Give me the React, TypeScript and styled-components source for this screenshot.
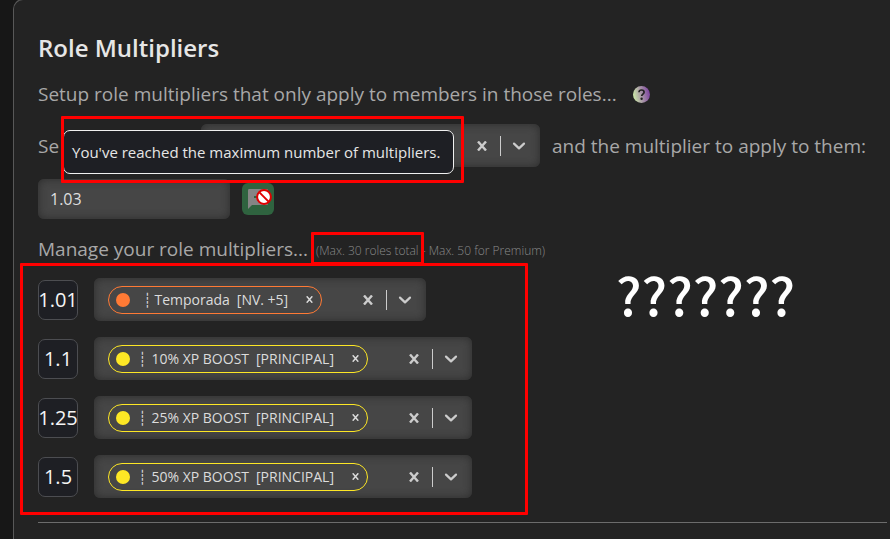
import React from "react";
import styled, { createGlobalStyle } from "styled-components";

const GlobalStyle = createGlobalStyle`
  *, *::before, *::after { box-sizing: border-box; }
  html { background: #171717; }
  body {
    margin: 0;
    background: #171717;
    color: #a8a8a8;
    font-family: "Open Sans", "Noto Sans", sans-serif;
    font-size: 19px;
    line-height: 28px;
    overflow: hidden;
  }
  button, input { font: inherit; color: inherit; }
  h2, p, ul { margin: 0; padding: 0; }
  ul { list-style: none; }
`;

const Page = styled.main`
  padding-left: 13px;
  overflow: hidden;
`;

const Panel = styled.section`
  margin-top: -1px;
  min-height: calc(100vh + 1px);
  padding: 31px 3px 0 24px;
  border: 1px solid #585858;
  border-right: 0;
  border-bottom: 0;
  border-top-left-radius: 10px;
  background: #232323;
`;

const Title = styled.h2`
  color: #e6e6e6;
  font-size: 24px;
  font-weight: 600;
  line-height: 34px;
`;

const Intro = styled.p`
  display: flex;
  align-items: center;
  gap: 16px;
  margin-top: 15px;
`;

const HelpButton = styled.button`
  display: flex;
  padding: 0;
  border: 0;
  background: none;
`;

const Form = styled.form`
  position: relative;
  display: flex;
  flex-wrap: wrap;
  align-items: center;
  gap: 12px;
  margin-top: 16px;
`;

const SelectLabel = styled.span`
  flex: 0 0 151px;
  white-space: nowrap;
`;

const SelectBox = styled.div<{ $wide?: boolean }>`
  display: flex;
  align-items: center;
  width: ${(p) => (p.$wide ? "339px" : "auto")};
  height: 43px;
  padding: 0 14px;
  border-radius: 6px;
  background: #464646;
  box-shadow: inset 0 0 8px #2c2c2c;
  color: #cccccc;
`;

const SelectTools = styled.div`
  display: flex;
  align-items: center;
  gap: 11px;
  margin-left: auto;
  padding-left: 41px;
`;

const IconButton = styled.button`
  display: flex;
  align-items: center;
  justify-content: center;
  padding: 0;
  border: 0;
  background: none;
`;

const Divider = styled.span`
  width: 1px;
  height: 20px;
  margin-left: 2px;
  background: #cccccc;
`;

const NumberInput = styled.input`
  width: 192px;
  height: 40px;
  padding: 0 12px;
  border: 0;
  border-radius: 6px;
  background: #464646;
  box-shadow: inset 0 0 8px #2c2c2c;
  color: #dedede;
  font-size: 16px;
  outline: none;
`;

const AddButton = styled.button`
  position: relative;
  display: flex;
  align-items: center;
  justify-content: center;
  width: 32px;
  height: 32px;
  padding: 0;
  border: 0;
  border-radius: 6px;
  background: #2f633f;
`;

const BlockedCursor = styled.svg`
  position: absolute;
  top: 6px;
  left: 14px;
`;

const Tooltip = styled.div`
  position: absolute;
  top: 6px;
  left: 25px;
  padding: 9px 13px 9px 8px;
  border: 1px solid #f0f0f0;
  border-radius: 7px;
  background: #1e1f24;
  color: #e6e6e6;
  font-size: 15px;
  line-height: 24px;
  white-space: nowrap;
`;

const Mark = styled.span<{ $inset: string }>`
  position: absolute;
  inset: ${(p) => p.$inset};
  border: 3px solid #ff0000;
  border-radius: 1px;
  pointer-events: none;
`;

const Manage = styled.p`
  display: flex;
  align-items: center;
  gap: 8px;
  margin-top: 16px;
`;

const Limits = styled.small`
  margin-top: 4px;
  color: #8a8a8a;
  font-size: 12px;
  font-weight: 300;
  line-height: 20px;
`;

const Marked = styled.span`
  position: relative;
`;

const Content = styled.div`
  display: flex;
  align-items: flex-start;
  gap: 144px;
  margin-top: 15px;
`;

const List = styled.ul`
  position: relative;
  display: grid;
  gap: 16px;
  flex: 0 0 434px;
`;

const Row = styled.li`
  display: flex;
  align-items: center;
  gap: 16px;
`;

const Badge = styled.span`
  display: flex;
  align-items: center;
  justify-content: center;
  width: 40px;
  height: 40px;
  border: 1px solid #4c4d51;
  border-radius: 7px;
  background: #1e1f24;
  color: #f4f4f4;
  font-size: 20px;
`;

const Chip = styled.span<{ $color: string }>`
  display: flex;
  align-items: center;
  height: 28px;
  padding: 0 8px 0 7px;
  border: 1px solid ${(p) => p.$color};
  border-radius: 14px;
  color: #dcdcdc;
  font-size: 14px;
  line-height: 20px;
  white-space: pre;
`;

const Dot = styled.span<{ $color: string }>`
  width: 14px;
  height: 14px;
  margin-right: 8px;
  border-radius: 50%;
  background: ${(p) => p.$color};
`;

const Bar = styled.span<{ $tight?: boolean }>`
  margin-left: ${(p) => (p.$tight ? "5px" : "0")};
  margin-right: ${(p) => (p.$tight ? "3px" : "5px")};
  font-family: "DejaVu Sans Mono", monospace;
  font-size: 14px;
  line-height: 16px;
`;

const Tag = styled.span`
  margin-left: 7px;
  margin-right: 18px;
`;

const Aside = styled.p`
  color: #ffffff;
  font-family: "Noto Sans CJK SC", sans-serif;
  font-size: 52px;
  font-weight: 500;
  line-height: 32px;
`;

const Rule = styled.hr`
  height: 1px;
  margin: 24px 0 0;
  border: 0;
  background: #6c6c6c;
`;

function Cross({ size, weight }: { size: number; weight: number }) {
  return (
    <svg width={size} height={size} viewBox="0 0 10 10" fill="none" stroke="currentColor" strokeWidth={weight}>
      <path d="M1 .5 9 9.5M9 .5 1 9.5" />
    </svg>
  );
}

function Tools() {
  return (
    <SelectTools>
      <IconButton type="button" aria-label="Clear all">
        <Cross size={10} weight={2.4} />
      </IconButton>
      <Divider />
      <IconButton type="button" aria-label="Open list">
        <svg width="14" height="10" viewBox="0 0 14 10" fill="none" stroke="currentColor" strokeWidth="2.2" strokeLinecap="round" strokeLinejoin="round">
          <path d="M2 2.6 7 7.4l5-4.8" />
        </svg>
      </IconButton>
    </SelectTools>
  );
}

const ORANGE = "#ff7a35";
const YELLOW = "#fde725";

const roles = [
  { value: "1.01", name: "Temporada", tag: "[NV. +5]", color: ORANGE, tight: true },
  { value: "1.1", name: "10% XP BOOST", tag: "[PRINCIPAL]", color: YELLOW },
  { value: "1.25", name: "25% XP BOOST", tag: "[PRINCIPAL]", color: YELLOW },
  { value: "1.5", name: "50% XP BOOST", tag: "[PRINCIPAL]", color: YELLOW },
];

export default function App() {
  return (
    <Page>
      <GlobalStyle />
      <Panel>
        <Title>Role Multipliers</Title>
        <Intro>
          Setup role multipliers that only apply to members in those roles...
          <HelpButton type="button" aria-label="Help">
            <svg width="17" height="17" viewBox="0 0 17 17">
              <defs>
                <linearGradient id="help" x1="0" y1="0.6" x2="1" y2="0.4">
                  <stop offset="0.05" stopColor="#c9e3a8" />
                  <stop offset="0.5" stopColor="#a795a6" />
                  <stop offset="0.95" stopColor="#8048a0" />
                </linearGradient>
              </defs>
              <circle cx="8.500" cy="8.500" r="8.500" fill="url(#help)" />
              <path d="M6 6.300C6 4.800 7 4 8.500 4s2.600.800 2.600 2.200c0 1.900-2.400 1.900-2.400 3.900" fill="none" stroke="#222" strokeWidth="1.700" />
              <circle cx="8.600" cy="12.700" r="1.200" fill="#222" />
            </svg>
          </HelpButton>
        </Intro>
        <Form onSubmit={(e) => e.preventDefault()}>
          <SelectLabel>Se</SelectLabel>
          <SelectBox $wide>
            <Tools />
          </SelectBox>
          <label htmlFor="multiplier">and the multiplier to apply to them:</label>
          <NumberInput id="multiplier" defaultValue="1.03" />
          <AddButton type="submit" aria-label="Add multiplier" aria-disabled="true">
            <svg width="20" height="20" viewBox="0 0 20 20">
              <path d="M0 1.200Q0 0 1.200 0H18.800Q20 0 20 1.200V14.800Q20 16 18.800 16H4L0 20Z" fill="#858585" />
              <path d="M10 4v8M6 8h8" stroke="#2f633f" strokeWidth="2" />
            </svg>
            <BlockedCursor width="16" height="16" viewBox="0 0 16 16">
              <circle cx="8" cy="8" r="6.900" fill="#fff" stroke="#e00000" strokeWidth="2" />
              <path d="M3.400 3.400 12.600 12.600" stroke="#e00000" strokeWidth="2" />
            </BlockedCursor>
          </AddButton>
          <Tooltip role="tooltip">
            You've reached the maximum number of multipliers.
            <Mark $inset="-15px -11px -10px -3px" />
          </Tooltip>
        </Form>
        <Manage>
          Manage your role multipliers...
          <Limits>
            <Marked>
              (Max. 30 roles total
              <Mark $inset="-10px -5px -6px -5px" />
            </Marked>{" "}
            - Max. 50 for Premium)
          </Limits>
        </Manage>
        <Content>
          <List>
            {roles.map((role) => (
              <Row key={role.value}>
                <Badge>{role.value}</Badge>
                <SelectBox>
                  <Chip $color={role.color}>
                    <Dot $color={role.color} />
                    <Bar $tight={role.tight}>┊</Bar>
                    {role.name}
                    <Tag>{role.tag}</Tag>
                    <IconButton type="button" aria-label={`Remove ${role.name}`}>
                      <Cross size={7} weight={2.2} />
                    </IconButton>
                  </Chip>
                  <Tools />
                </SelectBox>
              </Row>
            ))}
            <Mark $inset="-15px -56px -17px -18px" />
          </List>
          <Aside>???????</Aside>
        </Content>
        <Rule />
      </Panel>
    </Page>
  );
}
